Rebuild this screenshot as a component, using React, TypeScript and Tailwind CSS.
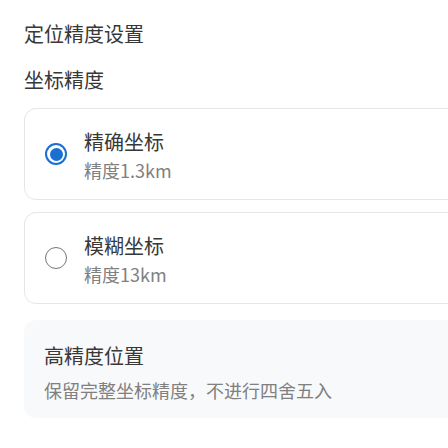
import { useState } from 'react';

const options = [
  { id: 'exact', title: '精确坐标', desc: '精度1.3km' },
  { id: 'fuzzy', title: '模糊坐标', desc: '精度13km' },
];

function Radio({ checked }: { checked: boolean }) {
  if (checked) {
    return (
      <span className="flex h-[22px] w-[22px] shrink-0 items-center justify-center rounded-full border-2 border-[#1a6fd0] bg-white">
        <span className="h-[13px] w-[13px] rounded-full bg-[#1a6fd0]" />
      </span>
    );
  }
  return <span className="h-[22px] w-[22px] shrink-0 rounded-full border-[1.5px] border-[#767676] bg-white" />;
}

export default function App() {
  const [mode, setMode] = useState('exact');

  return (
    <div
      className="h-[448px] w-[448px] overflow-hidden bg-white text-[#383838]"
      style={{ fontFamily: '"Noto Sans CJK SC", "Noto Sans", sans-serif' }}
    >
      <div className="w-[560px] pl-6 pt-5">
        <h1 className="text-[20px] leading-[28px]">定位精度设置</h1>
        <h2 className="mt-[18px] text-[20px] leading-[28px]">坐标精度</h2>

        <div className="mt-[14px] flex flex-col gap-3">
          {options.map((o) => (
            <label
              key={o.id}
              onClick={() => setMode(o.id)}
              className="flex h-[92px] cursor-pointer items-center gap-[17px] rounded-xl border border-[#e6e6e6] bg-white pl-[20px] pr-5"
            >
              <Radio checked={mode === o.id} />
              <div className="flex flex-col pt-1">
                <span className="text-[20px] leading-[28px]">{o.title}</span>
                <span className="text-[18px] leading-[28px] text-[#808080]">{o.desc}</span>
              </div>
            </label>
          ))}
        </div>

        <div className="mt-4 rounded-xl bg-[#f8f9fb] px-5 pt-[22px] pb-[14px]">
          <div className="text-[20px] leading-[28px]">高精度位置</div>
          <div className="mt-[6px] text-[18px] leading-[28px] text-[#808080]">
            保留完整坐标精度，不进行四舍五入
          </div>
        </div>
      </div>
    </div>
  );
}
